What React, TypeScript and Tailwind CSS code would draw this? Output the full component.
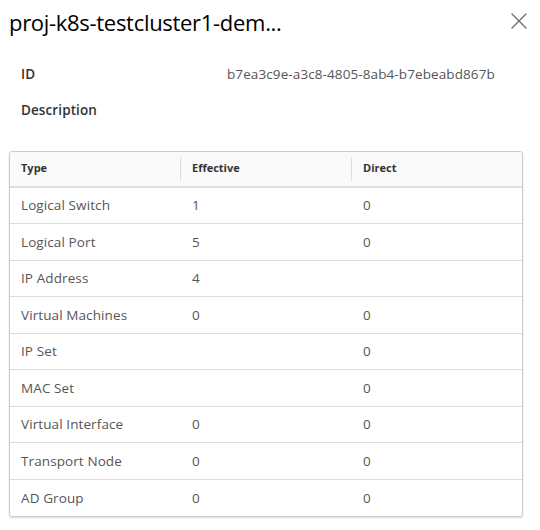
import { X } from "lucide-react";

type Row = { type: string; effective: string; direct: string };

const ROWS: Row[] = [
  { type: "Logical Switch", effective: "1", direct: "0" },
  { type: "Logical Port", effective: "5", direct: "0" },
  { type: "IP Address", effective: "4", direct: "" },
  { type: "Virtual Machines", effective: "0", direct: "0" },
  { type: "IP Set", effective: "", direct: "0" },
  { type: "MAC Set", effective: "", direct: "0" },
  { type: "Virtual Interface", effective: "0", direct: "0" },
  { type: "Transport Node", effective: "0", direct: "0" },
  { type: "AD Group", effective: "0", direct: "0" },
];

export default function App() {
  return (
    <div
      className="w-[540px] h-[530px] bg-white overflow-hidden"
      style={{ fontFamily: '"Open Sans", "Noto Sans", sans-serif' }}
    >
      <div className="flex items-start justify-between pl-[9px] pr-[7px] pt-[6px]">
        <h1 className="text-[22px] leading-[32px] text-[#000] font-normal tracking-[-0.3px]">
          proj-k8s-testcluster1-dem...
        </h1>
        <button className="mt-[1px] text-[#6f6f6f]">
          <X size={28} strokeWidth={1.2} />
        </button>
      </div>

      <div className="mt-[26px] pl-[21px] flex flex-col gap-[16px] text-[13.5px] tracking-[0.1px] text-[#333]">
        <div className="flex">
          <span className="w-[206px] font-semibold">ID</span>
          <span className="text-[#565656]">b7ea3c9e-a3c8-4805-8ab4-b7ebeabd867b</span>
        </div>
        <div className="flex">
          <span className="w-[206px] font-semibold">Description</span>
        </div>
      </div>

      <div className="mx-[9px] mt-[30px] w-[514px] border border-[#ccc] rounded-[3px] shadow-[0_1px_2px_rgba(0,0,0,0.15)] overflow-hidden">
        <div className="grid grid-cols-[171px_171px_1fr] h-[36px] items-center bg-[#fafafa] border-b-2 border-[#ddd] text-[11px] font-bold text-[#333]">
          <div className="pl-[11px] flex items-center justify-between">
            <span>Type</span>
            <span className="w-px h-[24px] bg-[#ddd]" />
          </div>
          <div className="pl-[11px] flex items-center justify-between">
            <span>Effective</span>
            <span className="w-px h-[24px] bg-[#ddd]" />
          </div>
          <div className="pl-[11px]">Direct</div>
        </div>
        {ROWS.map((r, i) => (
          <div
            key={r.type}
            className={`grid grid-cols-[171px_171px_1fr] h-[36.5px] items-center text-[13.5px] tracking-[0.1px] text-[#565656] ${
              i < ROWS.length - 1 ? "border-b border-[#ddd]" : ""
            }`}
          >
            <div className="pl-[11px]">{r.type}</div>
            <div className="pl-[11px]">{r.effective}</div>
            <div className="pl-[11px]">{r.direct}</div>
          </div>
        ))}
      </div>
    </div>
  );
}
